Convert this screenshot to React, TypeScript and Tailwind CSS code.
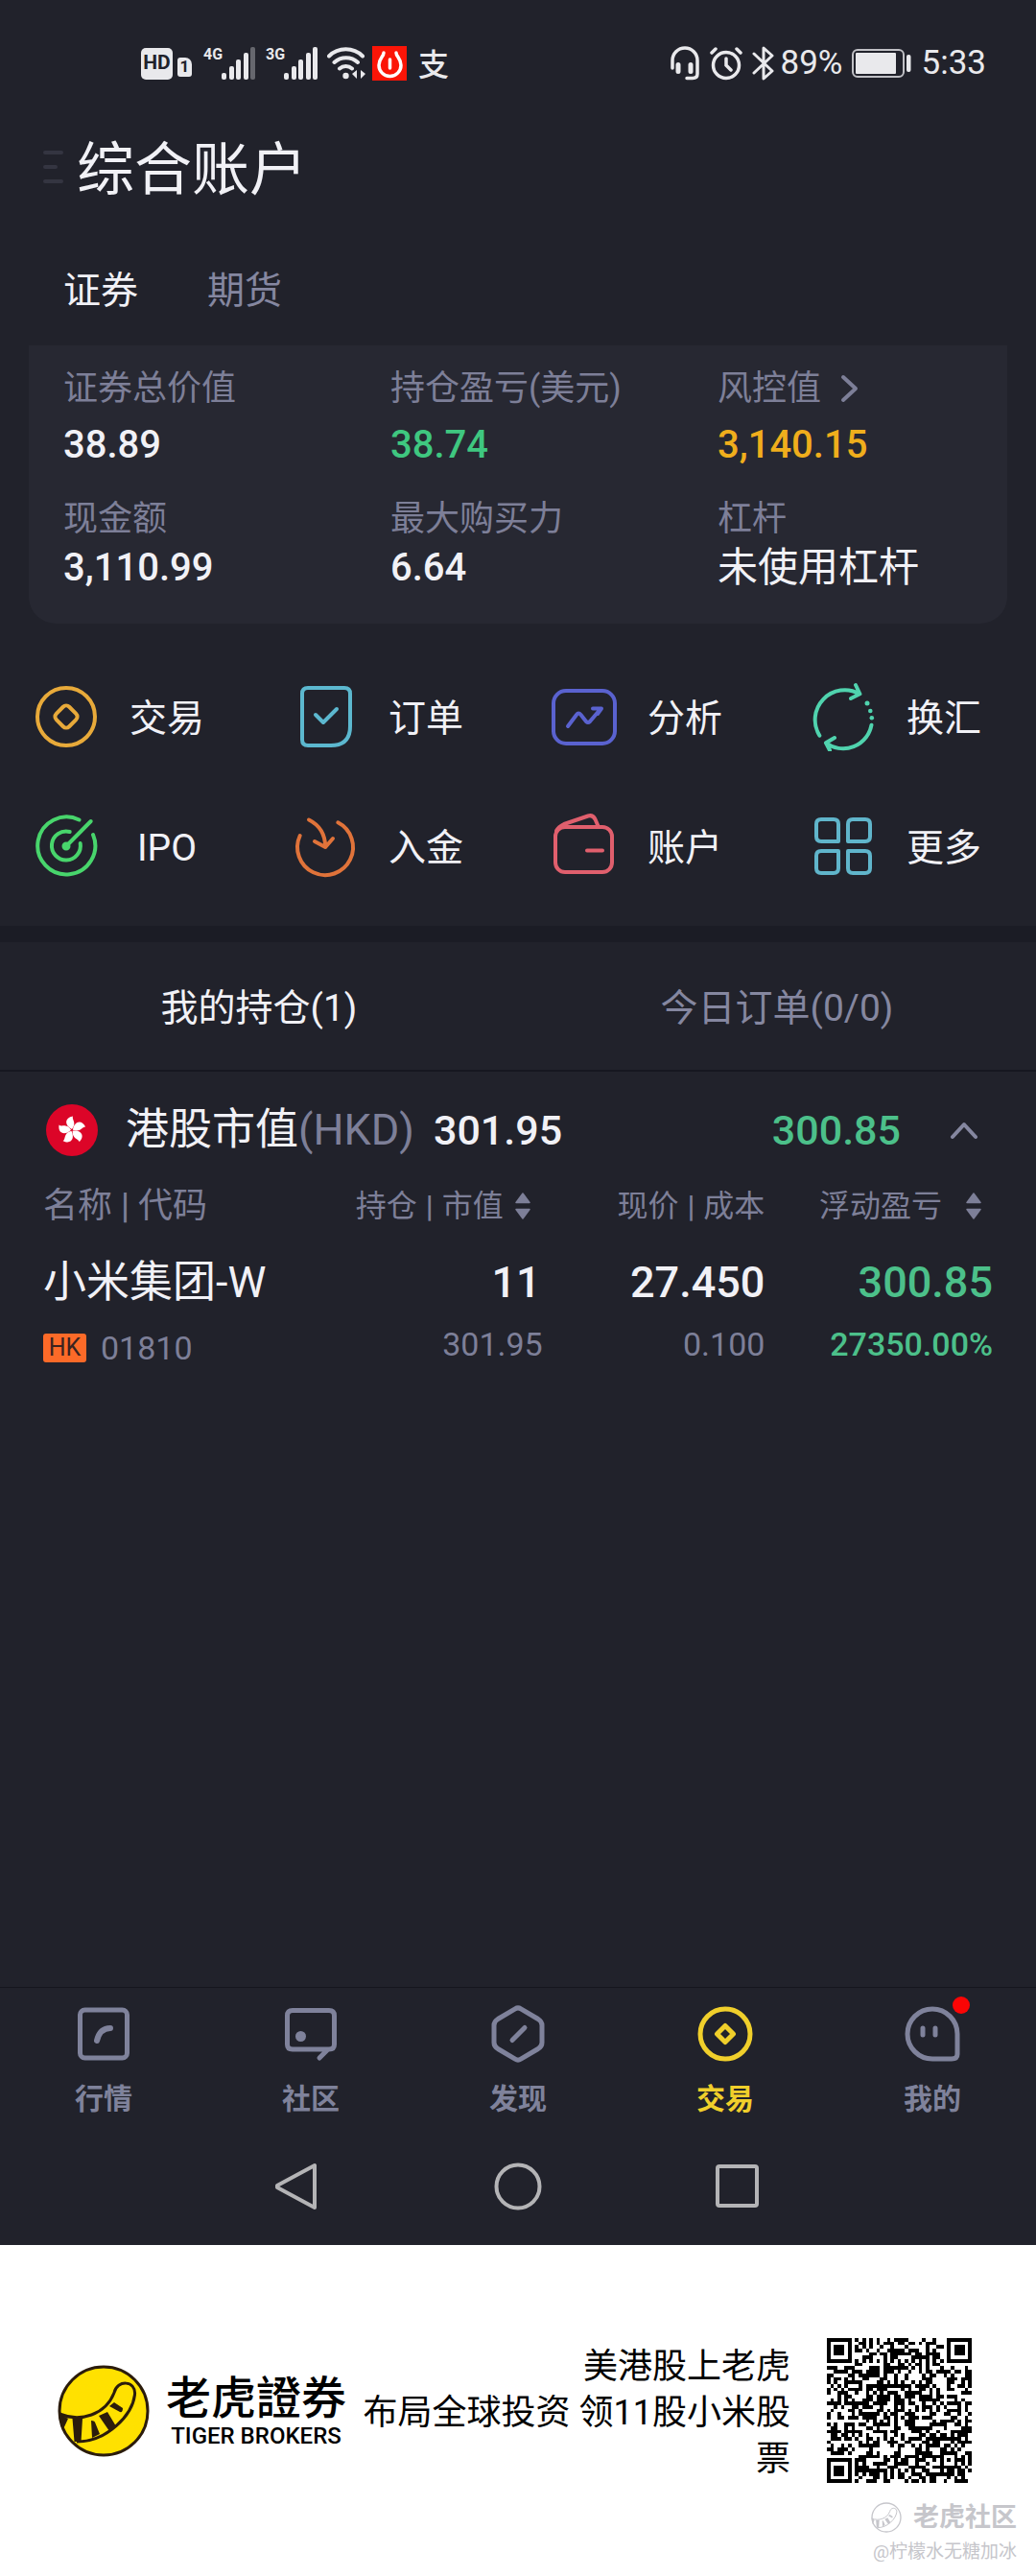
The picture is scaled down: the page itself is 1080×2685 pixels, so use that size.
import React from 'react';

const Svg = ({ size, className = '', children }: { size: number; className?: string; children: React.ReactNode }) => (
  <svg
    width={size}
    height={size}
    viewBox={`0 0 ${size} ${size}`}
    fill="none"
    stroke="currentColor"
    strokeWidth={size > 60 ? 4 : 5}
    strokeLinecap="round"
    strokeLinejoin="round"
    aria-hidden="true"
    className={`shrink-0 ${className}`}
  >
    {children}
  </svg>
);

const Signal = ({ label, weak = false }: { label: string; weak?: boolean }) => (
  <span className="flex h-[34px] items-end">
    <span className="w-[19px] self-start text-[16px] leading-[16px] font-bold">{label}</span>
    <svg width="36" height="34" viewBox="0 0 36 34" fill="currentColor" aria-hidden="true">
      <rect x="0" y="27" width="5" height="7" rx="2" />
      <rect x="8" y="20" width="5" height="14" rx="2" />
      <rect x="15" y="13" width="5" height="21" rx="2" />
      <rect x="23" y="6" width="5" height="28" rx="2" />
      <rect x="30" y="0" width="5" height="34" rx="2" opacity={weak ? 0.35 : 1} />
    </svg>
  </span>
);

const StatusBar = () => (
  <div className="flex h-11 items-center justify-between pr-[52px] pl-[147px] text-[#e9e9ec]">
    <div className="flex items-center">
      <span className="flex h-[33px] w-[33px] items-center justify-center rounded-[5px] bg-[#e9e9ec] text-[21px] font-bold text-[#21222b]">HD</span>
      <span className="mt-2 ml-[5px] flex h-5 w-[15px] items-center justify-center rounded-[3px] rounded-tr-[7px] bg-[#e9e9ec] text-[17px] font-bold text-[#21222b]">1</span>
      <span className="ml-[12px]"><Signal label="4G" weak /></span>
      <span className="ml-[10px]"><Signal label="3G" /></span>
      <svg className="ml-[9px]" width="40" height="34" viewBox="0 0 40 34" fill="none" stroke="currentColor" strokeWidth="4" strokeLinecap="round" aria-hidden="true">
        <path d="M2 9.500A25 25 0 0 1 37 9.500M7.500 16A18 18 0 0 1 32 16M13 22.500A10 10 0 0 1 26 22.500" />
        <circle cx="19.500" cy="30" r="3.200" fill="currentColor" stroke="none" />
        <path d="M31 24v9l-5-5zM35 24v9l5-5z" fill="currentColor" stroke="none" />
      </svg>
      <svg className="ml-[7px]" width="36" height="36" viewBox="0 0 36 36" fill="none" stroke="#fff" strokeLinecap="round" strokeLinejoin="round" aria-hidden="true">
        <rect width="36" height="36" fill="#fb1507" stroke="none" />
        <path d="M12 7C12 11 7 13 7 20A11.500 11.500 0 0 0 30 20C30 13 25 11 25 7" strokeWidth="3.500" />
        <path d="M18.500 14v9" strokeWidth="3.500" />
      </svg>
      <span className="mt-1 ml-[12px] text-[32px] leading-9 font-medium">支</span>
    </div>
    <div className="flex items-center text-[35px]">
      <svg width="32" height="36" viewBox="0 0 32 36" fill="none" stroke="currentColor" strokeWidth="3.500" strokeLinecap="round" aria-hidden="true">
        <path d="M3 23V15A12.500 12.500 0 0 1 29 15V29Q29 33.500 24 33.500H18" />
        <path d="M9 19.500v7M22 19.500v7" strokeWidth="5" />
      </svg>
      <svg className="ml-[10px]" width="34" height="36" viewBox="0 0 34 36" fill="none" stroke="currentColor" strokeWidth="3.500" strokeLinecap="round" aria-hidden="true">
        <circle cx="17" cy="20" r="13.500" />
        <path d="M17 13v7l5 5" />
        <path d="M2 7l4-4M32 7l-4-4" />
      </svg>
      <svg className="ml-[10px]" width="24" height="36" viewBox="0 0 24 36" fill="none" stroke="currentColor" strokeWidth="3" strokeLinejoin="round" strokeLinecap="round" aria-hidden="true">
        <path d="M2 8L21 26L12 34V2L21 10L2 28" />
      </svg>
      <span className="ml-[6px] leading-9">89%</span>
      <svg className="ml-[9px]" width="62" height="30" viewBox="0 0 62 30" aria-hidden="true">
        <rect x="1" y="1" width="53" height="28" rx="5" fill="none" stroke="currentColor" strokeWidth="2" opacity="0.8" />
        <rect x="4" y="4" width="42" height="22" rx="1" fill="currentColor" />
        <rect x="57" y="6" width="4.500" height="18" rx="2" fill="currentColor" />
      </svg>
      <span className="ml-[11px] leading-9">5:33</span>
    </div>
  </div>
);

const stats = [
  { label: '证券总价值', value: '38.89', color: 'text-[#f1f1f6]' },
  { label: '持仓盈亏(美元)', value: '38.74', color: 'text-[#3fc780]' },
  { label: '风控值', value: '3,140.15', color: 'text-[#f0ae1c]', more: true },
  { label: '现金额', value: '3,110.99', color: 'text-[#f1f1f6]' },
  { label: '最大购买力', value: '6.64', color: 'text-[#f1f1f6]' },
  { label: '杠杆', value: '未使用杠杆', color: 'text-[#f1f1f6]', cjk: true },
];

const Stat = ({ s, gap }: { s: (typeof stats)[number]; gap: string }) => (
  <div className={`flex flex-col ${gap}`}>
    <dt className="flex items-center text-[36px] leading-[48px] text-[#7d7f98]">
      {s.label}
      {s.more && (
        <svg className="ml-[20px]" width="20" height="30" viewBox="0 0 20 30" fill="none" stroke="currentColor" strokeWidth="4" strokeLinecap="round" strokeLinejoin="round" aria-hidden="true">
          <path d="M3 3L16 15L3 27" />
        </svg>
      )}
    </dt>
    <dd className={`leading-[48px] ${s.cjk ? 'text-[42px]' : 'text-[40px] font-medium'} ${s.color}`}>{s.value}</dd>
  </div>
);

const actions = [
  {
    name: '交易', color: 'text-[#e8aa3a]',
    icon: <><circle cx="36" cy="36" r="30" /><rect x="26.500" y="26.500" width="19" height="19" rx="4.500" transform="rotate(45 36 36)" /></>,
  },
  {
    name: '订单', color: 'text-[#5cb8cf]',
    icon: <><path d="M18 6H56Q62 6 62 12V46Q62 66 42 66H18Q12 66 12 60V12Q12 6 18 6Z" /><path d="M26 34L34 42L48 28" /></>,
  },
  {
    name: '分析', color: 'text-[#5a62cf]',
    icon: <><rect x="4" y="9" width="64" height="55" rx="13" /><path d="M19 46L28 34Q30 31 32.500 34L38 41Q40 43 42 41L53 28M45 27.500H54L50 33" /></>,
  },
  {
    name: '换汇', color: 'text-[#50d3ae]',
    icon: (
      <>
        <path d="M11.400 55.700A31 31 0 0 1 53 12.300M49 3L53.400 12.300L44 17" />
        <path d="M65.500 44.700A30 30 0 0 1 18 63.300M27 58L18 63.300L22 71" />
        <g fill="currentColor" stroke="none"><circle cx="61" cy="22" r="2.500" /><circle cx="64.300" cy="30" r="2.300" /><circle cx="65.800" cy="37.300" r="2.300" /></g>
      </>
    ),
  },
  {
    name: 'IPO', color: 'text-[#48d56c]',
    icon: <><path d="M49.500 8.500A30 30 0 1 0 64 24" /><path d="M39.700 21A15 15 0 1 0 50.700 33M36 36L61.700 10" /><circle cx="36" cy="36" r="2.500" fill="currentColor" /></>,
  },
  {
    name: '入金', color: 'text-[#e0733a]',
    icon: <><path d="M9.700 25A29 29 0 1 0 49.300 11.300" /><path d="M19 8.500Q36 17 36.200 37M25 31L36.200 37L44 28" /></>,
  },
  {
    name: '账户', color: 'text-[#e05f6d]',
    icon: <><rect x="6" y="16" width="59" height="47" rx="10" /><path d="M7 20Q9 16 15 13L40 4.500Q45 3 47.500 8L50.500 15M39 40.500H55" /></>,
  },
  {
    name: '更多', color: 'text-[#60b5cb]',
    icon: (
      <>
        <path d="M13 8H26Q31 8 31 13V31H13Q8 31 8 26V13Q8 8 13 8Z" />
        <path d="M46 8H59Q64 8 64 13V26Q64 31 59 31H41V13Q41 8 46 8Z" />
        <path d="M13 41H31V59Q31 64 26 64H13Q8 64 8 59V46Q8 41 13 41Z" />
        <path d="M41 41H59Q64 41 64 46V59Q64 64 59 64H46Q41 64 41 59Z" />
      </>
    ),
  },
];

const Bar = () => <span className="mx-[9px] font-medium">|</span>;

const SortIcon = ({ className }: { className: string }) => (
  <svg className={`shrink-0 ${className}`} width="16" height="30" viewBox="0 0 16 30" fill="currentColor" stroke="currentColor" strokeWidth="1.500" strokeLinejoin="round" aria-hidden="true">
    <path d="M8 2L15 11.500H1Z" />
    <path d="M8 28L15 18.500H1Z" />
  </svg>
);

const navItems = [
  { name: '行情', icon: <><rect x="5.500" y="5" width="49" height="50" rx="5" /><path d="M23 37Q26 24 37 24" strokeWidth="6" /></> },
  { name: '社区', icon: <><path d="M11 5.500H49Q54.500 5.500 54.500 11V41Q54.500 46 49 46H11Q5.500 46 5.500 41V11Q5.500 5.500 11 5.500ZM47 47L39 55" /><circle cx="19.500" cy="32.500" r="5.500" fill="currentColor" stroke="none" /></> },
  { name: '发现', icon: <><path d="M33 3.800L51 14.500Q55 17 55 21V39Q55 43 51 45.500L33 56.200Q30 58 27 56.200L9 45.500Q5 43 5 39V21Q5 17 9 14.500L27 3.800Q30 2 33 3.800Z" /><path d="M37 23.500L24 36.500" /></> },
  { name: '交易', active: true, icon: <><circle cx="30" cy="30" r="26" /><path d="M30 21.500L38.500 30L30 38.500L21.500 30Z" /></> },
  { name: '我的', badge: true, icon: <><path d="M30 4A26 26 0 0 0 30 56H50Q56 56 56 51V30A26 26 0 0 0 30 4Z" /><path d="M20 24v7M33 24v7" /></> },
];

const N = 41;
const inFinder = (x: number, y: number) => (x < 8 && y < 8) || (x > N - 9 && y < 8) || (x < 8 && y > N - 9);
const qrPath = (() => {
  let d = '';
  let seed = 20190711;
  for (let y = 0; y < N; y++) {
    for (let x = 0; x < N; x++) {
      seed = (Math.imul(seed, 1664525) + 1013904223) >>> 0;
      let on = (seed >>> 16) % 100 < 54;
      if (inFinder(x, y)) {
        const fx = x > N - 9 ? x - (N - 7) : x;
        const fy = y > N - 9 ? y - (N - 7) : y;
        const r = Math.max(Math.abs(fx - 3), Math.abs(fy - 3));
        on = r === 3 || r < 2;
      } else if (Math.abs(x - 34) < 3 && Math.abs(y - 34) < 3) {
        on = Math.max(Math.abs(x - 34), Math.abs(y - 34)) !== 1;
      } else if (x === 6 || y === 6) {
        on = (x + y) % 2 === 0;
      }
      if (on) d += `M${x} ${y}h1v1h-1z`;
    }
  }
  return d;
})();

const TigerTail = () => (
  <>
    <path d="M2 51C24 60 50 52 59 29C62 15 82 16 80.500 31C78 52 52 80 20 80" fill="none" strokeWidth="3" />
    <path d="M2 51L11 56L5 69ZM15.500 56H26L24.500 80H17.500ZM35 58Q39 58 39.500 61L44 72L36 76ZM43 53L52 49L61 64L54 69ZM54 43L59 39L68 45Q68 50 65 49Z" stroke="none" fill="currentColor" />
  </>
);

export default function App() {
  return (
    <div lang="zh-CN" className="flex min-h-screen flex-col bg-[#21222b] font-[Roboto,'Noto_Sans_CJK_SC',sans-serif] text-[#f1f1f6]">
      <header className="pt-11">
        <StatusBar />
        <div className="mt-[58px] flex items-center pl-[45px]">
          <button type="button" aria-label="菜单" className="mb-2 flex w-[21px] flex-col gap-[11px]">
            <span className="h-1 w-full rounded-full bg-[#343541]" />
            <span className="h-1 w-[15px] rounded-full bg-[#343541]" />
            <span className="h-1 w-full rounded-full bg-[#343541]" />
          </button>
          <h1 className="ml-[14px] text-[60px] leading-[64px]">综合账户</h1>
        </div>
        <div className="mt-[69px] flex gap-[72px] pl-[66px] text-[39px] leading-[48px]">
          <button type="button">证券</button>
          <button type="button" className="text-[#8587a0]">期货</button>
        </div>
      </header>

      <main className="flex grow flex-col">
        <dl className="mx-[30px] mt-[33px] grid grid-cols-[35fr_35fr_31fr] gap-y-[29px] rounded-b-[28px] bg-[#272832] pt-[21px] pb-[34px] pl-[36px]">
          {stats.map((s, i) => <Stat key={s.label} s={s} gap={i < 3 ? 'gap-[11px]' : 'gap-[3px]'} />)}
        </dl>

        <div className="grid grid-cols-4 gap-y-[63px] pt-[61px] pb-[47px]">
          {actions.map((a) => (
            <button key={a.name} type="button" className="flex items-center gap-[30px] pl-[33px]">
              <Svg size={72} className={a.color}>{a.icon}</Svg>
              <span className="w-[78px] pt-1 text-center text-[39px] leading-[48px]">{a.name}</span>
            </button>
          ))}
        </div>

        <div className="h-[17px] bg-[#1b1c25]" />

        <div className="grid grid-cols-2 border-b-2 border-[#161720] text-[39px] leading-[48px]">
          <button type="button" className="pt-[45px] pb-[40px]">我的持仓(1)</button>
          <button type="button" className="pt-[45px] pb-[40px] text-[#8587a0]">今日订单(0/0)</button>
        </div>

        <section>
          <div className="flex items-center pt-[33px] pr-[59px] pl-[48px] text-[43px] leading-[56px]">
            <svg width="54" height="54" viewBox="0 0 54 54" aria-hidden="true">
              <circle cx="27" cy="27" r="27" fill="#dc0528" />
              {[0, 72, 144, 216, 288].map((r) => (
                <path key={r} d="M27 26C19 22 19 14 28 12.500C26.500 16 32.500 19 27 26Z" fill="#fff" transform={`rotate(${r} 27 27)`} />
              ))}
            </svg>
            <h2 className="ml-[29px] text-[45px]">港股市值<span className="text-[#7d7f98]">(HKD)</span></h2>
            <span className="ml-[20px] font-medium">301.95</span>
            <span className="ml-auto font-medium text-[#4cc08a]">300.85</span>
            <button type="button" aria-label="收起" className="ml-[50px] text-[#8587a0]">
              <svg width="32" height="20" viewBox="0 0 32 20" fill="none" stroke="currentColor" strokeWidth="4" strokeLinecap="round" strokeLinejoin="round" aria-hidden="true">
                <path d="M4 17L16 4L28 17" />
              </svg>
            </button>
          </div>

          <div className="mt-[27px] px-[45px]">
            <table className="w-full table-fixed text-right">
              <colgroup>
                <col className="w-[28%]" />
                <col className="w-[25%]" />
                <col className="w-[23%]" />
                <col className="w-[24%]" />
              </colgroup>
              <thead className="text-[32px] leading-[48px] text-[#7d7f98]">
                <tr>
                  <th className="text-left text-[36px] font-normal">名称<Bar />代码</th>
                  <th className="font-normal">
                    <button type="button" className="inline-flex items-center whitespace-nowrap">持仓<Bar />市值<SortIcon className="mr-[17px] ml-[12px]" /></button>
                  </th>
                  <th className="font-normal whitespace-nowrap">现价<Bar />成本</th>
                  <th className="font-normal">
                    <button type="button" className="inline-flex items-center whitespace-nowrap">浮动盈亏<SortIcon className="mr-[12px] ml-[25px]" /></button>
                  </th>
                </tr>
              </thead>
              <tbody className="whitespace-nowrap">
                <tr className="text-[45px] leading-[56px] font-medium">
                  <td className="pt-[28px] text-left font-normal">小米集团-W</td>
                  <td className="pt-[28px] pr-[6px]">11</td>
                  <td className="pt-[28px]">27.450</td>
                  <td className="pt-[28px] text-[#4cc08a]">300.85</td>
                </tr>
                <tr className="text-[34px] leading-[44px] text-[#7d7f98]">
                  <td className="pt-[18px]">
                    <span className="flex items-center">
                      <span className="flex h-[30px] w-[45px] items-center justify-center rounded-[3px] bg-[#fc6a28] text-[25px] text-[#3a2320]">HK</span>
                      <span className="ml-[15px]">01810</span>
                    </span>
                  </td>
                  <td className="pt-[9px] pr-[4px]">301.95</td>
                  <td className="pt-[9px]">0.100</td>
                  <td className="pt-[9px] font-medium text-[#4cc08a]">27350.00%</td>
                </tr>
              </tbody>
            </table>
          </div>
        </section>
      </main>

      <nav className="grid grid-cols-5 border-t border-[#15161e] pt-[18px]">
        {navItems.map((n) => (
          <a key={n.name} href="#" className={`flex flex-col items-center gap-[18px] ${n.active ? 'text-[#f0cf2b]' : 'text-[#7f829b]'}`}>
            <span className="relative">
              <Svg size={60}>{n.icon}</Svg>
              {n.badge && <span className="absolute -top-[9px] -right-[9px] size-[18px] rounded-full bg-[#fb0505]" />}
            </span>
            <span className="text-[30px] leading-[40px] font-bold">{n.name}</span>
          </a>
        ))}
      </nav>

      <div className="flex justify-center gap-[178px] pt-[45px] pb-[35px] text-[#b4b4b6]">
        <button type="button" aria-label="返回">
          <svg width="52" height="52" viewBox="0 0 52 52" fill="none" stroke="currentColor" strokeWidth="4" strokeLinejoin="round" aria-hidden="true"><path d="M44 4V48L5 27V25Z" /></svg>
        </button>
        <button type="button" aria-label="主屏幕">
          <svg width="52" height="52" viewBox="0 0 52 52" fill="none" stroke="currentColor" strokeWidth="4" aria-hidden="true"><circle cx="26" cy="26" r="22.500" /></svg>
        </button>
        <button type="button" aria-label="最近任务">
          <svg width="52" height="52" viewBox="0 0 52 52" fill="none" stroke="currentColor" strokeWidth="4" strokeLinejoin="round" aria-hidden="true"><rect x="4" y="5" width="41" height="41" rx="2" /></svg>
        </button>
      </div>

      <footer className="bg-white pt-[97px] pb-[13px] text-black">
        <div className="flex items-center pr-[67px] pl-[60px]">
          <svg width="96" height="96" viewBox="0 0 96 96" className="shrink-0 text-[#2b1c0c]" stroke="currentColor" aria-hidden="true">
            <circle cx="48" cy="48" r="46" fill="#ffe100" strokeWidth="3" />
            <TigerTail />
          </svg>
          <div className="ml-[17px] flex flex-col items-center pt-[2px] whitespace-nowrap">
            <span className="text-[47px] leading-[50px] font-medium">老虎證券</span>
            <span className="text-[24px] leading-[28px] font-medium">TIGER BROKERS</span>
          </div>
          <p className="grow basis-0 pt-1 text-right text-[36px] leading-[48px]">
            美港股上老虎<br />布局全球投资 领11股小米股票
          </p>
          <svg className="ml-[38px] shrink-0" width="151" height="151" viewBox="0 0 41 41" shapeRendering="crispEdges" role="img" aria-label="二维码">
            <path d={qrPath} fill="#000" />
          </svg>
        </div>
        <div className="mt-[20px] flex flex-col items-end pr-[20px] text-[#c6c6cb]">
          <span className="flex items-center gap-[12px] text-[27px] leading-[30px] font-bold">
            <svg width="32" height="32" viewBox="0 0 96 96" fill="none" stroke="currentColor" aria-hidden="true">
              <circle cx="48" cy="48" r="45" strokeWidth="4" />
              <TigerTail />
            </svg>
            老虎社区
          </span>
          <span className="mt-[8px] text-[19px] leading-[24px]">@柠檬水无糖加冰</span>
        </div>
      </footer>
    </div>
  );
}
